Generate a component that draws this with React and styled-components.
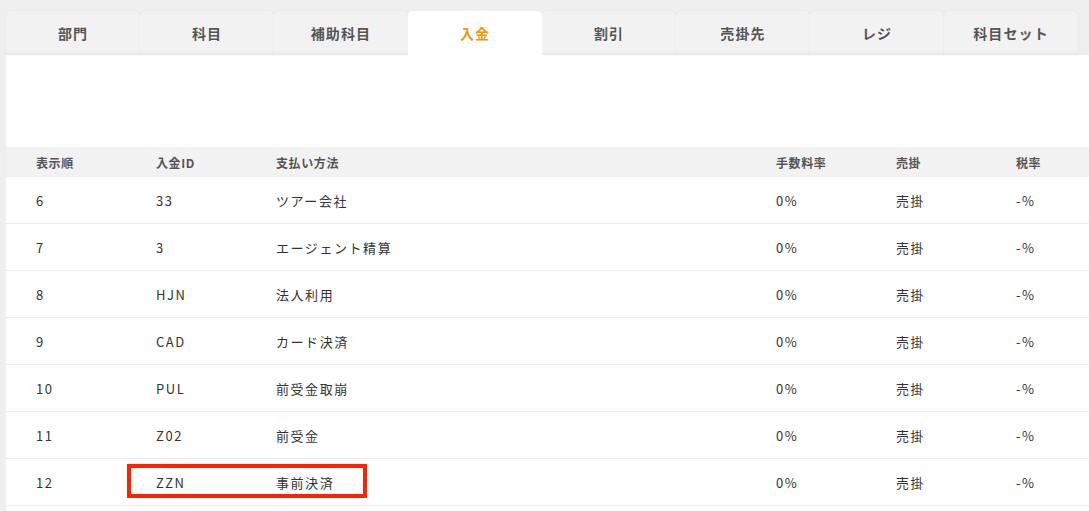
import React from 'react';
import styled, { createGlobalStyle } from 'styled-components';

const GlobalStyle = createGlobalStyle`
  html, body {
    margin: 0;
    padding: 0;
    background: #efefef;
    overflow: hidden;
  }
  body {
    font-family: "Noto Sans CJK JP", "Noto Sans", sans-serif;
    color: #333;
  }
`;

const tabs = ['部門', '科目', '補助科目', '入金', '割引', '売掛先', 'レジ', '科目セット'];

const rows = [
  { order: 6, id: '33', name: 'ツアー会社' },
  { order: 7, id: '3', name: 'エージェント精算' },
  { order: 8, id: 'HJN', name: '法人利用' },
  { order: 9, id: 'CAD', name: 'カード決済' },
  { order: 10, id: 'PUL', name: '前受金取崩' },
  { order: 11, id: 'Z02', name: '前受金' },
  { order: 12, id: 'ZZN', name: '事前決済', marked: true },
];

const App = () => (
  <>
    <GlobalStyle />
    <Page>
      <TabBar>
        {tabs.map((t) => (
          <Tab key={t} $active={t === '入金'}>
            {t}
          </Tab>
        ))}
      </TabBar>
      <Panel>
        <Spacer />
        <Table>
          <HeadRow>
            <Cell $w={120}>表示順</Cell>
            <Cell $w={120}>入金ID</Cell>
            <Cell $w={500}>支払い方法</Cell>
            <Cell $w={120}>手数料率</Cell>
            <Cell $w={120}>売掛</Cell>
            <Cell $w={120}>税率</Cell>
          </HeadRow>
          {rows.map((r) => (
            <Row key={r.order}>
              <Cell $w={120}>{r.order}</Cell>
              <Cell $w={120}>{r.id}</Cell>
              <Cell $w={500}>{r.name}</Cell>
              <Cell $w={120}>0%</Cell>
              <Cell $w={120}>売掛</Cell>
              <Cell $w={120}>-%</Cell>
              {r.marked && <Marker />}
            </Row>
          ))}
        </Table>
      </Panel>
    </Page>
  </>
);

const Page = styled.div`
  padding: 11px 0 0 6px;
  width: 1083px;
`;

const TabBar = styled.div`
  display: flex;
  height: 44px;
`;

const Tab = styled.div`
  flex: 0 0 134px;
  box-sizing: border-box;
  display: flex;
  align-items: center;
  justify-content: center;
  border-radius: 5px 5px 0 0;
  font-size: 14px;
  font-weight: 700;
  letter-spacing: 0.08em;
  background: ${({ $active }) => ($active ? '#fff' : '#f2f2f2')};
  color: ${({ $active }) => ($active ? '#f39800' : '#555')};
  box-shadow: ${({ $active }) =>
    $active
      ? 'none'
      : 'inset 0 -4px 4px -3px rgba(0,0,0,0.07), 0 0 2px rgba(0,0,0,0.08)'};
  position: relative;
  z-index: ${({ $active }) => ($active ? 1 : 0)};
`;

const Panel = styled.div`
  background: #fff;
  height: 460px;
  overflow: hidden;
`;

const Spacer = styled.div`
  height: 92px;
`;

const Table = styled.div`
  display: flex;
  flex-direction: column;
`;

const HeadRow = styled.div`
  display: flex;
  align-items: center;
  height: 30px;
  background: #f2f2f2;
  font-size: 12px;
  font-weight: 700;
  color: #555;
  letter-spacing: 0.05em;
`;

const Row = styled.div`
  position: relative;
  display: flex;
  align-items: center;
  height: 46px;
  border-bottom: 1px solid #ebebeb;
  font-size: 13px;
  color: #333;
  letter-spacing: 0.12em;
`;

const Cell = styled.div`
  flex: 0 0 ${({ $w }) => $w}px;
  box-sizing: border-box;
  padding-left: 30px;
  white-space: nowrap;
`;

const Marker = styled.div`
  position: absolute;
  left: 121px;
  top: 5px;
  width: 240px;
  height: 34px;
  box-sizing: border-box;
  border: 4px solid #ff2200;
`;

export default App;
